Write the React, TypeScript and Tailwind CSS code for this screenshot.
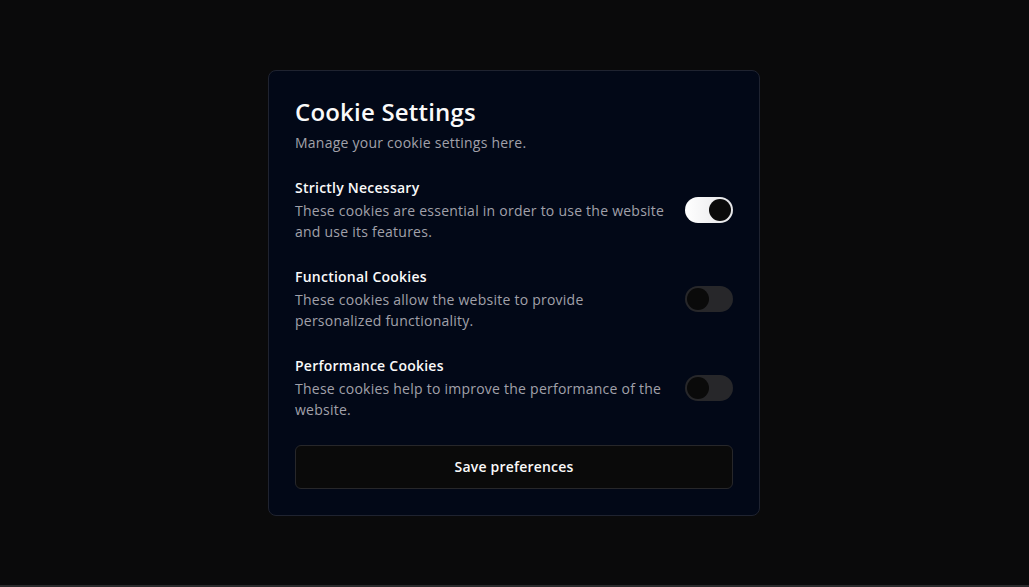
import React, { useState } from "react";

interface CookieOption {
  id: string;
  title: string;
  description: string;
  enabled: boolean;
}

const initialOptions: CookieOption[] = [
  {
    id: "necessary",
    title: "Strictly Necessary",
    description: "These cookies are essential in order to use the website and use its features.",
    enabled: true,
  },
  {
    id: "functional",
    title: "Functional Cookies",
    description: "These cookies allow the website to provide personalized functionality.",
    enabled: false,
  },
  {
    id: "performance",
    title: "Performance Cookies",
    description: "These cookies help to improve the performance of the website.",
    enabled: false,
  },
];

const Toggle = ({ checked, onChange }: { checked: boolean; onChange: () => void }) => (
  <button
    type="button"
    role="switch"
    aria-checked={checked}
    onClick={onChange}
    className={
      "flex h-[26px] w-[48px] shrink-0 items-center rounded-full p-[2px] " +
      (checked ? "bg-linear-to-r from-white to-[#e4e4e7]" : "bg-[#27272a]")
    }
  >
    <span
      className={
        "block size-[22px] rounded-full bg-[#0a0a0a] transition-transform " +
        (checked ? "translate-x-[22px]" : "translate-x-0")
      }
    />
  </button>
);

export default function App() {
  const [options, setOptions] = useState(initialOptions);

  const toggle = (id: string) =>
    setOptions((prev) => prev.map((o) => (o.id === id ? { ...o, enabled: !o.enabled } : o)));

  return (
    <div
      className="flex h-[587px] w-full justify-center border-b-2 border-[#2a2a2c] bg-[#0a0a0b] pt-[70px] pr-px"
      style={{ fontFamily: '"Open Sans", "Noto Sans", sans-serif' }}
    >
      <div className="flex h-fit w-[492px] flex-col gap-[25px] rounded-lg border border-[#1f2330] bg-[#020817] p-[26px]">
        <div className="-mt-px flex flex-col gap-[5px]">
          <h2 className="text-2xl leading-8 font-semibold tracking-[0.2px] text-[#fafafa]">Cookie Settings</h2>
          <p className="text-sm leading-5 tracking-[0.24px] text-[#a1a1aa]">Manage your cookie settings here.</p>
        </div>

        {options.map((o) => (
          <div key={o.id} className="flex items-center justify-between gap-4">
            <div className="flex max-w-[374px] flex-col tracking-[0.24px]">
              <span className="text-sm leading-5 font-semibold text-[#fafafa]">{o.title}</span>
              <span className="mt-[2px] text-sm leading-[21px] text-[#a1a1aa]">{o.description}</span>
            </div>
            <Toggle checked={o.enabled} onChange={() => toggle(o.id)} />
          </div>
        ))}

        <button
          type="button"
          className="h-[44px] w-full rounded-md border border-[#27272a] bg-[#0a0a0a] text-sm font-semibold tracking-[0.2px] text-[#fafafa]"
        >
          Save preferences
        </button>
      </div>
    </div>
  );
}
